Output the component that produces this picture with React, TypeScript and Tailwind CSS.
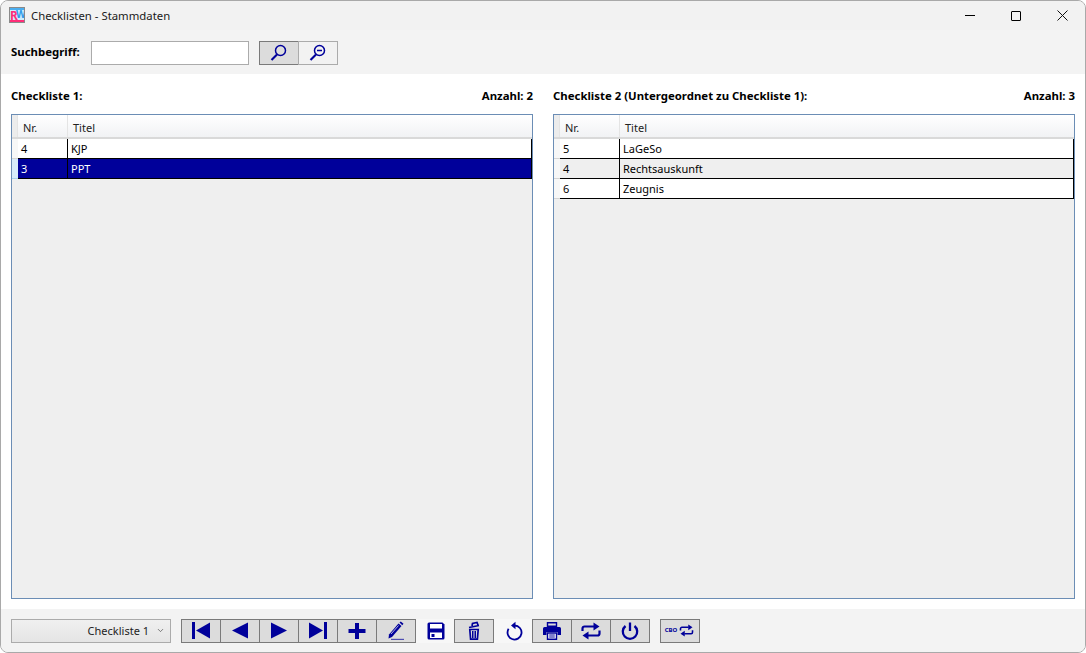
import React from 'react';
import { ChevronDown } from 'lucide-react';

const NAVY = '#00009a';

function AppLogo() {
  return (
    <div className="relative h-[16px] w-[16px] overflow-hidden border border-[#8a8a8a] bg-[#cdeefd] font-['Liberation_Sans',sans-serif]">
      <div className="absolute left-0 top-0 h-[2px] w-full bg-[#4aaef0]" />
      <span className="absolute left-0 top-[2px] text-[12px] font-bold leading-[11px] text-[#ff2d78]">R</span>
      <span className="absolute left-[6px] top-[1px] text-[10px] font-bold leading-[11px] text-[#2f9ae8]">W</span>
      <div className="absolute bottom-0 left-0 h-[2px] w-full bg-[#ff2d78]" />
    </div>
  );
}

function Glyph({ children }: { children: React.ReactNode }) {
  return (
    <svg width="24" height="24" viewBox="0 0 24 24" fill={NAVY} stroke="none">
      {children}
    </svg>
  );
}

const icons: Record<string, React.ReactNode> = {
  first: (
    <Glyph>
      <rect x="3" y="3" width="3" height="17" />
      <path d="M7 11.500 21 3.500v16z" />
    </Glyph>
  ),
  prev: (
    <Glyph>
      <path d="M4 11.500 20 3.500v16z" />
    </Glyph>
  ),
  next: (
    <Glyph>
      <path d="M20 11.500 4 3.500v16z" />
    </Glyph>
  ),
  last: (
    <Glyph>
      <path d="M17 11.500 3 3.500v16z" />
      <rect x="18" y="3" width="3" height="17" />
    </Glyph>
  ),
  plus: (
    <Glyph>
      <path d="M10 4h4v6h6.500v4H14v6h-4v-6H3.500v-4H10z" />
    </Glyph>
  ),
  edit: (
    <Glyph>
      <path d="M5 15.500 14.500 4.500l3 2.500L8 18l-3.500 1.500z" />
      <path d="M7 15 14.500 6.500" stroke="#fff" strokeWidth="0.700" />
      <path d="M15.500 3.500 16.800 2.500l2.700 2.300-1.200 1.400z" />
      <rect x="7" y="19.800" width="13" height="1.200" opacity="0.65" />
    </Glyph>
  ),
  save: (
    <Glyph>
      <path d="M5 3.500h13.500l2 2V19a1.500 1.500 0 0 1-1.500 1.500H5A1.500 1.500 0 0 1 3.500 19V5A1.500 1.500 0 0 1 5 3.500z" />
      <rect x="6" y="5" width="12" height="4.500" fill="#fff" />
      <rect x="6" y="13.500" width="12" height="5.500" fill="#fff" />
      <rect x="7.500" y="15" width="3" height="3" />
    </Glyph>
  ),
  trash: (
    <Glyph>
      <path d="M7.800 10.500h8.400l-.8 9.700H8.600z" fill="none" stroke={NAVY} strokeWidth="1.700" />
      <path d="M10.500 12v7M12 12v7M13.500 12v7" stroke={NAVY} strokeWidth="1" />
      <path d="M7 8.500 17 6.500M10 7l.5-2.500 4.500-1 1 2.500" fill="none" stroke={NAVY} strokeWidth="1.700" />
    </Glyph>
  ),
  undo: (
    <svg width="24" height="24" viewBox="0 0 24 24" fill="none">
      <path d="M6.600 9.800a7 7 0 1 0 5.900-3.300" stroke={NAVY} strokeWidth="1.800" />
      <path d="M9 6.500 13.500 2.800v7.400z" fill={NAVY} />
    </svg>
  ),
  print: (
    <Glyph>
      <path d="M7.500 3.700h9v3.500h-9z" fill="none" stroke={NAVY} strokeWidth="1.400" />
      <path d="M4.500 8h15A1.500 1.500 0 0 1 21 9.500V16h-3.500v-3h-11v3H3V9.500A1.500 1.500 0 0 1 4.500 8z" />
      <path d="M7.500 14h9v6.300h-9z" fill="#fff" stroke={NAVY} strokeWidth="1.400" />
      <path d="M9.200 16h5.600M9.200 18h5.600" stroke={NAVY} strokeWidth="1" />
    </Glyph>
  ),
  swap: <SwapPaths />,
  power: (
    <svg width="24" height="24" viewBox="0 0 24 24" fill="none" stroke={NAVY} strokeWidth="2.300">
      <path d="M12 3.500v8.500" />
      <path d="M7.500 7a7.200 7.200 0 1 0 9 0" />
    </svg>
  ),
};

function SwapPaths({ size = 24 }: { size?: number }) {
  return (
    <svg width={size} height={size} viewBox="0 0 24 24" fill={NAVY}>
      <path d="M3.500 12V9.500A2 2 0 0 1 5.500 7.500H15" fill="none" stroke={NAVY} strokeWidth="2.200" />
      <path d="M14.500 3.500 20.500 7.500l-6 4z" />
      <path d="M20.500 11.500v3a2 2 0 0 1-2 2H9" fill="none" stroke={NAVY} strokeWidth="2.200" />
      <path d="M9.500 12.500 3.500 16.500l6 4z" />
    </svg>
  );
}

function ToolButton({ icon, kind = 'dark' }: { icon: string; kind?: 'dark' | 'plain' }) {
  return (
    <div
      className={
        kind === 'dark'
          ? 'flex h-[24px] w-[40px] -ml-px items-center justify-center border border-[#7a7a7a] bg-[#dcdcdc] first:ml-0'
          : 'flex h-[24px] w-[39px] items-center justify-center bg-[#f7f7f7]'
      }
    >
      {icons[icon]}
    </div>
  );
}

function SearchIcon({ minus }: { minus?: boolean }) {
  return (
    <svg width="18" height="18" viewBox="0 0 18 18" fill="none" stroke={NAVY}>
      <circle cx="10.500" cy="6.500" r="5" strokeWidth="1.500" />
      <path d="M7 10.500 1.500 16" strokeWidth="2.200" />
      {minus && <path d="M8 6.500h5" strokeWidth="1.500" />}
    </svg>
  );
}

type Row = { nr: string; titel: string; alt?: boolean; selected?: boolean };

function Grid({ rows, nrWidth }: { rows: Row[]; nrWidth: string }) {
  return (
    <div className="flex h-[485px] flex-col border border-[#6b8db5] bg-[#efefef]">
      <div className="flex h-[24px] border-b-2 border-[#d9d9d9] bg-gradient-to-b from-white to-[#f1f2f4] text-[#222]">
        <div className="w-[6px] border-r border-[#e4e4e4] bg-[#ececec]" />
        <div className={`${nrWidth} flex items-center border-r border-[#e4e4e4] pl-[5px] pt-[4px]`}>Nr.</div>
        <div className="flex flex-1 items-center pl-[5px] pt-[4px]">Titel</div>
      </div>
      <div>
        {rows.map((r) => (
          <div key={r.nr} className="flex h-[20px]">
            <div
              className={
                'w-[6px] border-b ' +
                (r.selected ? 'border-[#a9d3ee] bg-[#d8ecf9]' : 'border-[#d5d5d5] bg-[#f7f7f7]')
              }
            />
            <div
              className={
                'flex flex-1 items-center border-b border-r border-black ' +
                (r.selected ? 'bg-[#00009a] text-white' : r.alt ? 'bg-[#efefef] text-black' : 'bg-white text-black')
              }
            >
              <div className={`${nrWidth} flex h-full items-center border-r border-black pl-[3px] pt-[2px]`}>{r.nr}</div>
              <div className="flex h-full flex-1 items-center pl-[3px] pt-[2px]">{r.titel}</div>
            </div>
          </div>
        ))}
      </div>
    </div>
  );
}

function Panel({
  title,
  count,
  rows,
  nrWidth,
}: {
  title: string;
  count: string;
  rows: Row[];
  nrWidth: string;
}) {
  return (
    <div className="w-[522px]">
      <div className="mb-[8px] flex h-[20px] items-center justify-between text-[11.400px] font-bold text-black">
        <span>{title}</span>
        <span>{count}</span>
      </div>
      <Grid rows={rows} nrWidth={nrWidth} />
    </div>
  );
}

export default function App() {
  return (
    <div className="flex h-[653px] w-[1086px] flex-col overflow-hidden rounded-lg border border-[#a9a9a9] bg-[#f3f3f3] font-['Open_Sans',sans-serif] text-[11px] text-black">
      {/* title bar */}
      <div className="flex h-[29px] shrink-0 items-center justify-between bg-[#f2f2f2] pl-[8px]">
        <div className="flex items-center gap-[6px]">
          <AppLogo />
          <span className="text-[11.350px] text-[#1a1a1a]">Checklisten - Stammdaten</span>
        </div>
        <div className="flex">
          <div className="flex h-[29px] w-[46px] items-center justify-center">
            <div className="h-px w-[10px] bg-black" />
          </div>
          <div className="flex h-[29px] w-[46px] items-center justify-center">
            <div className="h-[10px] w-[10px] rounded-[1px] border border-black" />
          </div>
          <div className="flex h-[29px] w-[46px] items-center justify-center">
            <svg width="11" height="11" viewBox="0 0 11 11" stroke="#111" strokeWidth="1">
              <path d="M.500.500l10 10M10.500.500l-10 10" />
            </svg>
          </div>
        </div>
      </div>

      {/* search */}
      <div className="flex h-[44px] shrink-0 items-center bg-[#f3f3f3] pl-[10px]">
        <span className="w-[80px] text-[11.400px] font-bold">Suchbegriff:</span>
        <div className="mt-[2px] h-[24px] w-[158px] border border-[#ababab] bg-white" />
        <div className="ml-[10px] mt-[2px] flex">
          <div className="flex h-[24px] w-[40px] items-center justify-center border border-[#7a7a7a] bg-[#dcdcdc]">
            <SearchIcon />
          </div>
          <div className="-ml-px flex h-[24px] w-[40px] items-center justify-center border border-[#ababab] bg-[#f2f2f2]">
            <SearchIcon minus />
          </div>
        </div>
      </div>

      {/* lists */}
      <div className="flex h-[535px] shrink-0 justify-between bg-white px-[10px] pt-[12px]">
        <Panel
          title="Checkliste 1:"
          count="Anzahl: 2"
          nrWidth="w-[50px]"
          rows={[
            { nr: '4', titel: 'KJP' },
            { nr: '3', titel: 'PPT', selected: true },
          ]}
        />
        <Panel
          title="Checkliste 2 (Untergeordnet zu Checkliste 1):"
          count="Anzahl: 3"
          nrWidth="w-[60px]"
          rows={[
            { nr: '5', titel: 'LaGeSo' },
            { nr: '4', titel: 'Rechtsauskunft', alt: true },
            { nr: '6', titel: 'Zeugnis' },
          ]}
        />
      </div>

      {/* bottom toolbar */}
      <div className="flex flex-1 items-center bg-[#f3f3f3] pl-[10px]">
        <div className="flex h-[24px] w-[160px] items-center justify-end border border-[#ababab] bg-gradient-to-b from-[#f0f0f0] to-[#e5e5e5] pr-[4px]">
          <span className="pt-[2px] text-[#222]">Checkliste 1</span>
          <ChevronDown size={9} className="ml-[7px] mr-[1px] text-[#555]" />
        </div>
        <div className="ml-[10px] flex">
          {['first', 'prev', 'next', 'last', 'plus', 'edit'].map((i) => (
            <ToolButton key={i} icon={i} />
          ))}
          <ToolButton icon="save" kind="plain" />
          <ToolButton icon="trash" />
          <ToolButton icon="undo" kind="plain" />
          {['print', 'swap', 'power'].map((i) => (
            <ToolButton key={i} icon={i} />
          ))}
        </div>
        <div className="ml-[10px] flex h-[24px] w-[40px] items-center justify-center gap-[1px] border border-[#7a7a7a] bg-[#dcdcdc]">
          <span className="text-[6px] font-bold text-[#00009a]">CBO</span>
          <SwapPaths size={17} />
        </div>
      </div>
    </div>
  );
}
